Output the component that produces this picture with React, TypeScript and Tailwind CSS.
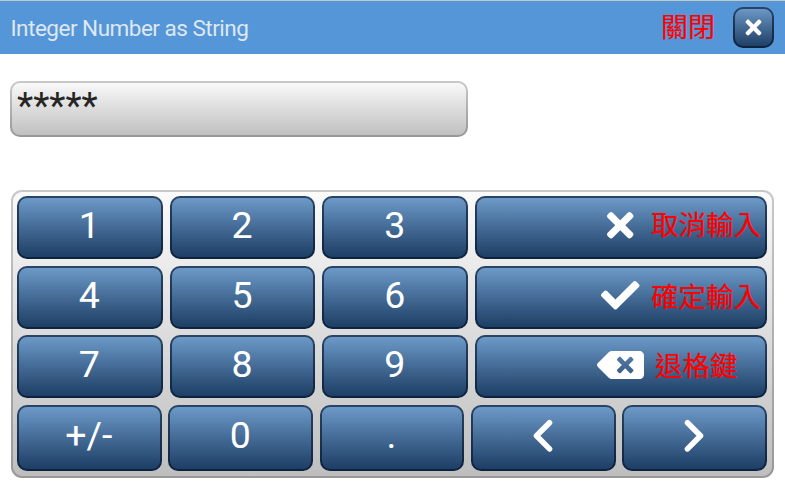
import type { ReactNode } from "react";
import { FaBackspace, FaCheck, FaTimes } from "react-icons/fa";

const keyStyle =
  "relative flex items-center justify-center rounded-[10px] border-2 border-[#04162c]/65 bg-linear-to-b from-[#709dcc] to-[#1b3c62] bg-origin-border text-white";

const labelStyle =
  "whitespace-nowrap font-['Noto_Sans_CJK_TC',sans-serif] leading-[28px] text-[#ff0000] [-webkit-text-stroke:0.2px_#ff0000]";

function Key({ children, className = "" }: { children: ReactNode; className?: string }) {
  return (
    <button type="button" className={`${keyStyle} min-w-0 flex-1 ${className}`}>
      <span className="flex items-center justify-center pb-[3px] pr-px text-[37.5px] leading-none">{children}</span>
    </button>
  );
}

function ActionKey({ icon, label, labelClass }: { icon: ReactNode; label: string; labelClass: string }) {
  return (
    <button type="button" className={`${keyStyle} w-[292px] shrink-0 pb-[4px] pr-px`}>
      {icon}
      <span className={`absolute text-[27.5px] ${labelStyle} ${labelClass}`}>{label}</span>
    </button>
  );
}

function Chevron({ points }: { points: string }) {
  return (
    <svg
      width="24"
      height="36"
      viewBox="0 0 24 36"
      fill="none"
      stroke="white"
      strokeWidth="5.6"
      strokeLinecap="round"
      strokeLinejoin="round"
    >
      <polyline points={points} />
    </svg>
  );
}

export default function App() {
  return (
    <div className="flex h-[503px] w-[785px] flex-col overflow-hidden bg-white font-[Roboto,sans-serif]">
      <header className="flex h-[54px] shrink-0 items-center border-t border-[#c6c8c2] bg-[#5596d8] pl-[10.5px] pr-[11px]">
        <h1 className="pt-[2px] text-[22.5px] leading-none tracking-[-0.5px] text-[#dfe7f0]">Integer Number as String</h1>
        <span className={`ml-auto mr-[18px] pb-[4px] text-[27px] ${labelStyle}`}>關閉</span>
        <button type="button" aria-label="Close" className={`${keyStyle} size-[41px]`}>
          <FaTimes className="size-[23px]" />
        </button>
      </header>

      <div className="ml-[10px] mt-[27px] h-[56px] w-[458px] shrink-0 rounded-[10px] border-[2.5px] border-black/20 bg-linear-to-b from-[#fbfbfb] to-[#bebebe] bg-origin-border pl-[5px] text-[37.5px] leading-[44px] text-[#262626]">
        *****
      </div>

      <main className="ml-[10.5px] mt-[52.5px] flex h-[288px] w-[763px] shrink-0 flex-col gap-[6.5px] rounded-[11px] border-[2.5px] border-black/20 bg-linear-to-b from-[#fbfbfb] to-[#bebebe] bg-origin-border px-[4.5px] pb-[5px] pt-[4.5px]">
        <div className="flex h-[63px] gap-[7px]">
          <Key>1</Key>
          <Key>2</Key>
          <Key>3</Key>
          <ActionKey icon={<FaTimes className="size-[38.5px]" />} label="取消輸入" labelClass="left-[174px] top-[11px]" />
        </div>
        <div className="flex h-[63px] gap-[7px]">
          <Key>4</Key>
          <Key>5</Key>
          <Key>6</Key>
          <ActionKey icon={<FaCheck className="size-[38.5px]" />} label="確定輸入" labelClass="left-[174px] top-[13.5px]" />
        </div>
        <div className="flex h-[63px] gap-[7px]">
          <Key>7</Key>
          <Key>8</Key>
          <Key>9</Key>
          <ActionKey icon={<FaBackspace className="h-[38px] w-[47px]" />} label="退格鍵" labelClass="left-[178px] top-[13px]" />
        </div>
        <div className="flex h-[66px] gap-[6.5px]">
          <Key>+/-</Key>
          <Key>0</Key>
          <Key>.</Key>
          <Key>
            <Chevron points="18.5,4.7 5.5,17.8 18.5,30.9" />
          </Key>
          <Key>
            <Chevron points="5.5,4.7 18.5,17.8 5.5,30.9" />
          </Key>
        </div>
      </main>
    </div>
  );
}
